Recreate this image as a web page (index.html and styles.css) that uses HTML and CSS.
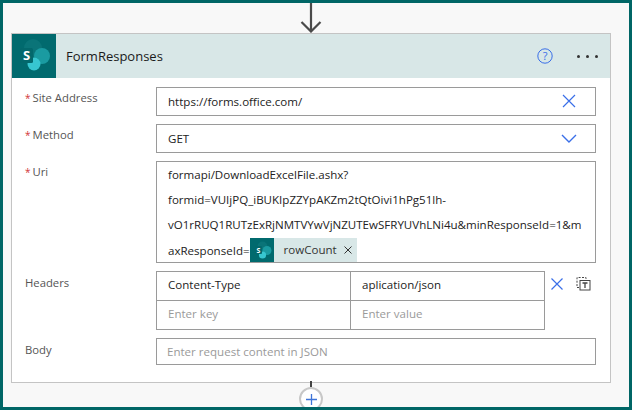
FILE: index.html
```html
<!DOCTYPE html>
<html lang="en">
<head>
<meta charset="utf-8">
<title>FormResponses</title>
<link rel="stylesheet" href="styles.css">
</head>
<body>
<div class="frame">
  <svg class="arrow" width="24" height="30" viewBox="0 0 24 30"><path d="M12 0V28M2.500 19l9.500 9.500 9.500-9.500" fill="none" stroke="#4a4a4a" stroke-width="2.200"/></svg>
  <section class="card">
    <header class="head">
      <div class="logo">
        <svg width="44" height="44" viewBox="0 0 44 44"><circle cx="21" cy="14" r="9" fill="#0a7478"/><circle cx="30" cy="22" r="8" fill="#1a9ba1"/><circle cx="22" cy="30" r="6.500" fill="#37c6d0"/><rect x="8" y="14" width="13" height="15" rx="1.500" fill="#03686c"/><text x="14.500" y="26" class="logo-s">S</text></svg>
      </div>
      <h1 class="title">FormResponses</h1>
      <svg class="help" width="16" height="16" viewBox="0 0 16 16"><circle cx="8" cy="8" r="7.200" fill="none" stroke="#3a6fe8" stroke-width="1"/><text x="8" y="12" class="help-q">?</text></svg>
      <div class="more"><i></i><i></i><i></i></div>
    </header>
    <div class="form">
      <div class="row">
        <label class="lbl req"><b>*</b>Site Address</label>
        <div class="field single"><span>https://forms.office.com/</span>
          <svg class="x" width="14" height="14" viewBox="0 0 14 14"><path d="M1 1l12 12M13 1L1 13" stroke="#3a6fe8" stroke-width="1.200" fill="none"/></svg></div>
      </div>
      <div class="row">
        <label class="lbl req"><b>*</b>Method</label>
        <div class="field single"><span>GET</span>
          <svg class="chev" width="16" height="9" viewBox="0 0 16 9"><path d="M1 1l7 7 7-7" stroke="#3a6fe8" stroke-width="1.400" fill="none"/></svg></div>
      </div>
      <div class="row">
        <label class="lbl req"><b>*</b>Uri</label>
        <div class="field uri">
          <div>formapi/DownloadExcelFile.ashx?</div>
          <div>formid=VUIjPQ_iBUKIpZZYpAKZm2tQtOivi1hPg51lh-</div>
          <div>vO1rRUQ1RUTzExRjNMTVYwVjNZUTEwSFRYUVhLNi4u&amp;minResponseId=1&amp;m</div>
          <div class="last">axResponseId=<span class="token"><span class="tlogo"><svg width="24" height="24" viewBox="0 0 24 24"><circle cx="12.500" cy="8.500" r="5" fill="#0a7478"/><circle cx="17" cy="12.500" r="4.500" fill="#1a9ba1"/><circle cx="12.500" cy="17" r="3.600" fill="#37c6d0"/><rect x="5" y="8" width="7" height="8" rx="1" fill="#03686c"/><text x="8.500" y="14.500" class="tlogo-s">S</text></svg></span><span class="tname">rowCount</span><svg class="tx" width="8" height="8" viewBox="0 0 8 8"><path d="M.5.5l7 7M7.500.5l-7 7" stroke="#333" stroke-width="1" fill="none"/></svg></span></div>
        </div>
      </div>
      <div class="row">
        <label class="lbl">Headers</label>
        <div class="kv">
          <div class="cell">Content-Type</div><div class="cell">aplication/json</div>
          <div class="cell ph">Enter key</div><div class="cell ph">Enter value</div>
        </div>
        <svg class="kx" width="12" height="12" viewBox="0 0 12 12"><path d="M.5.5l11 11M11.500.5l-11 11" stroke="#3a6fe8" stroke-width="1.200" fill="none"/></svg>
        <svg class="switch" width="15" height="15" viewBox="0 0 15 15"><path d="M3 11.500H1V1.500h9v2" fill="none" stroke="#444" stroke-dasharray="2 1.400"/><rect x="4" y="4.500" width="10" height="9.500" fill="#fff" stroke="#444"/><path d="M6.500 7h5M9 7v5" stroke="#444" stroke-width="1.300" fill="none"/></svg>
      </div>
      <div class="row">
        <label class="lbl">Body</label>
        <div class="field body ph"><span>Enter request content in JSON</span></div>
      </div>
    </div>
  </section>
  <div class="connector">
    <div class="stem"></div>
    <div class="plus"><svg width="13" height="13" viewBox="0 0 13 13"><path d="M6.500 1v11M1 6.500h11" stroke="#3f74d8" stroke-width="1.300" fill="none"/></svg></div>
  </div>
</div>
</body>
</html>
```
FILE: styles.css
```css
* { box-sizing: border-box; }
html, body { margin: 0; height: 100%; }
body { font-family: "Open Sans", "Noto Sans", "Liberation Sans", sans-serif; overflow: hidden; }
.frame {
  width: 632px; height: 410px; background: #f8f8f8;
  border: 3px solid #006666;
  padding: 0 8px; position: relative; display: flex; flex-direction: column; align-items: flex-start;
}
.arrow { display: block; margin-left: 288px; flex: none; }
.card { width: 600px; height: 350px; flex: none; background: #fff; border: 1px solid #c4c4c4; }
.head { height: 44px; background: #d8e7e7; display: flex; align-items: center; }
.logo { width: 44px; height: 44px; background: #016a6e; flex: none; }
.logo svg { display: block; }
.logo-s { font: 700 13px "Open Sans", sans-serif; fill: #fff; text-anchor: middle; }
.title { font: 400 13px "Open Sans", sans-serif; color: #1b1b1b; margin: 0 0 0 10px; flex: 1; }
.help { margin-right: 24px; }
.help-q { font: 400 11px "Open Sans", sans-serif; fill: #3a6fe8; text-anchor: middle; }
.more { display: flex; gap: 6px; margin-right: 12px; }
.more i { width: 3px; height: 3px; border-radius: 50%; background: #333; }
.form { padding: 9px 14px 0 13px; display: flex; flex-direction: column; gap: 8px; }
.row { display: flex; align-items: flex-start; }
.lbl { width: 131px; flex: none; font-size: 11.300px; line-height: 16px; color: #555; padding-top: 4px; }
.req { padding-top: 3px; }
.lbl b { color: #d13438; font-weight: 400; font-size: 10px; line-height: 0; margin-right: 2px; }
.field { width: 440px; border: 1px solid #9a9a9a; background: #fff; font-size: 11.550px; color: #222; padding-left: 11px; }
.single { height: 29px; display: flex; align-items: center; justify-content: space-between; padding: 0 19px 1px 11px; }
.single .chev { margin-right: -1px; }
.uri { height: 102px; line-height: 25px; white-space: nowrap; overflow: hidden; }
.last { display: flex; align-items: flex-end; height: 25px; line-height: 23px; }
.token { display: inline-flex; align-items: center; height: 24px; background: #d8e7e7; }
.tlogo { width: 24px; height: 24px; background: #016a6e; display: block; flex: none; }
.tlogo svg { display: block; }
.tlogo-s { font: 700 7px "Open Sans", sans-serif; fill: #fff; text-anchor: middle; }
.tname { margin: 0 7px 0 10px; color: #333; line-height: 24px; }
.tx { margin-right: 5px; }
.kv { width: 389px; display: grid; grid-template-columns: 194px 193px; grid-template-rows: 29px 28px; border: 1px solid #9a9a9a; font-size: 11.550px; color: #222; }
.cell { padding: 0 0 3px 11px; display: flex; align-items: center; border-right: 1px solid #9a9a9a; border-bottom: 1px solid #9a9a9a; }
.cell:nth-child(2n) { border-right: 0; }
.cell:nth-child(n+3) { border-bottom: 0; }
.ph { color: #9a9a9a; }
.kx { margin: 7px 0 0 6px; }
.switch { margin: 5px 0 0 13px; }
.body { height: 27px; display: flex; align-items: center; padding-left: 10px; color: #9a9a9a; }
.connector { position: absolute; left: 0; top: 378px; width: 100%; height: 26px; overflow: hidden; }
.stem { position: absolute; left: 307px; top: 0; width: 2px; height: 6px; background: #444; }
.plus { position: absolute; left: 296px; top: 6px; width: 24px; height: 24px; border: 2px solid #c8c8c8; border-radius: 50%; background: #fff; display: flex; align-items: center; justify-content: center; }
```
